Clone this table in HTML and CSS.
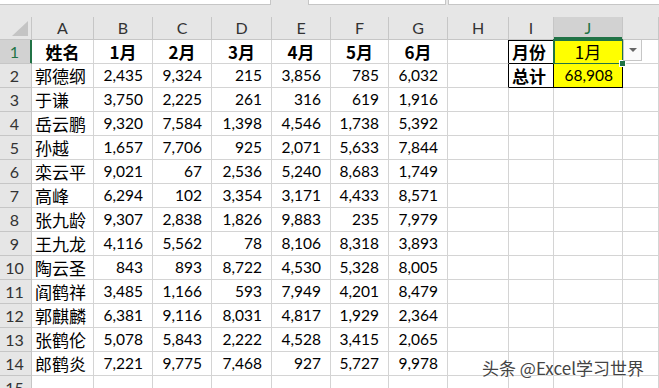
FILE: index.html
```html
<!DOCTYPE html>
<html lang="zh-CN">
  <head>
    <meta charset="UTF-8" />
    <meta name="viewport" content="width=device-width, initial-scale=1.0" />
    <title>月份汇总</title>
    <link rel="stylesheet" href="styles.css">
  </head>
  <body>
    <div class="toolbar">
      <div class="box box-name"></div>
      <div class="box box-mid"></div>
      <div class="box box-formula"></div>
    </div>

    <div class="sheet" id="sheet"></div>

    <div class="watermark">头条 @Excel学习世界</div>

    <script>
      const sheet = document.getElementById("sheet");

      const letters = ["A", "B", "C", "D", "E", "F", "G", "H", "I", "J", ""];
      const months = ["1月", "2月", "3月", "4月", "5月", "6月"];
      const rows = [
        ["郭德纲", 2435, 9324, 215, 3856, 785, 6032],
        ["于谦", 3750, 2225, 261, 316, 619, 1916],
        ["岳云鹏", 9320, 7584, 1398, 4546, 1738, 5392],
        ["孙越", 1657, 7706, 925, 2071, 5633, 7844],
        ["栾云平", 9021, 67, 2536, 5240, 8683, 1749],
        ["高峰", 6294, 102, 3354, 3171, 4433, 8571],
        ["张九龄", 9307, 2838, 1826, 9883, 235, 7979],
        ["王九龙", 4116, 5562, 78, 8106, 8318, 3893],
        ["陶云圣", 843, 893, 8722, 4530, 5328, 8005],
        ["阎鹤祥", 3485, 1166, 593, 7949, 4201, 8479],
        ["郭麒麟", 6381, 9116, 8031, 4817, 1929, 2364],
        ["张鹤伦", 5078, 5843, 2222, 4528, 3415, 2065],
        ["郎鹤炎", 7221, 9775, 7468, 927, 5727, 9978],
      ];

      function cell(cls, text) {
        const el = document.createElement("div");
        el.className = "cell " + cls;
        if (text !== undefined) el.textContent = text;
        sheet.appendChild(el);
        return el;
      }

      // Column headers
      const corner = cell("corner");
      corner.innerHTML =
        '<svg width="32" height="23" viewBox="0 0 32 23"><polygon points="12,19 28,19 28,4" fill="#c4c4c4"/></svg>';
      letters.forEach((l) => cell(l === "J" ? "col-head selected-col" : "col-head", l));

      // Total of January
      const total = rows.reduce((sum, r) => sum + r[1], 0);

      // Row 1: headings
      cell("row-head selected-row", "1");
      cell("cn bold center", "姓名");
      months.forEach((m) => cell("cn bold center", m));
      cell("edge-right");
      cell("cn bold lookup top", "月份");
      const active = cell("cn center pick lookup top", "1月");
      active.innerHTML +=
        '<span class="dropdown"><svg width="8" height="5" viewBox="0 0 8 5"><polygon points="0,0 8,0 4,4" fill="#666"/></svg></span>';
      cell("");

      // Data rows
      rows.forEach((r, i) => {
        cell("row-head", i + 2);
        cell("cn", r[0]);
        r.slice(1).forEach((n) => cell("num", n.toLocaleString("en-US")));
        if (i === 0) {
          cell("edge-right");
          cell("cn bold lookup", "总计");
          cell("num pick lookup", total.toLocaleString("en-US"));
        } else {
          cell("");
          cell("");
          cell("");
        }
        cell("");
      });

      // Partial row 15
      cell("row-head", 15);
      for (let i = 0; i < 11; i++) cell("");
    </script>
  </body>
</html>
```

FILE: styles.css
```css
body {
    margin: 0;
    width: 659px;
    height: 388px;
    overflow: hidden;
    background-color: #fff;
    font-family: Lato, "Noto Sans CJK SC", sans-serif;
    position: relative;
}

.toolbar {
    display: flex;
    height: 17px;
    background-color: #e6e6e6;
}

.box {
    height: 4px;
    background-color: #fff;
    border-bottom: 1px solid #c6c6c6;
}

.box-name {
    width: 270px;
    border-right: 1px solid #c6c6c6;
}

.box-mid {
    width: 136px;
    margin-left: 37px;
    border-left: 1px solid #c6c6c6;
    border-right: 1px solid #c6c6c6;
}

.box-formula {
    flex: 1;
    margin-left: 2px;
    border-left: 1px solid #c6c6c6;
}

.sheet {
    display: grid;
    grid-template-columns: 32px 62px 59px 59px 60px 59px 58px 59px 61px 45px 69px 1fr;
    grid-template-rows: 23px repeat(15, 24px);
}

.cell {
    box-sizing: border-box;
    border-right: 1px solid #d4d4d4;
    border-bottom: 1px solid #d4d4d4;
    padding: 0 3px;
    font-size: 15.5px;
    line-height: 23px;
    color: #000;
    white-space: nowrap;
    position: relative;
}

.corner {
    padding: 0;
    background-color: #e6e6e6;
    border-color: #c6c6c6;
}

.corner svg {
    display: block;
}

.col-head {
    background-color: #e6e6e6;
    border-color: #c6c6c6;
    text-align: center;
    color: #333;
    line-height: 22px;
    font-size: 16px;
}

.row-head {
    background-color: #e6e6e6;
    border-color: #c6c6c6;
    text-align: center;
    color: #333;
    font-size: 16px;
    padding: 0 2px 0 0;
}

.selected-col {
    background-color: #d2d2d2;
    color: #217346;
    box-shadow: inset 0 -2px 0 #217346;
}

.selected-row {
    background-color: #d2d2d2;
    color: #217346;
    box-shadow: inset -1px 0 0 #217346;
    border-right-color: #217346;
}

.cn {
    font-family: "Noto Sans CJK SC", sans-serif;
    font-size: 17px;
}

.bold {
    font-weight: bold;
}

.center {
    text-align: center;
}

.num {
    text-align: right;
    padding-right: 9px;
}

/* Lookup box in I1:J2 */
.edge-right {
    border-right-color: #000;
}

.lookup {
    border-right-color: #000;
    border-bottom-color: #000;
}

.top {
    box-shadow: inset 0 1px 0 #000;
}

.pick {
    background-color: #ffff00;
}

/* Active cell J1 */
.pick.top::after {
    content: "";
    position: absolute;
    top: -1px;
    left: -1px;
    right: -2px;
    bottom: -2px;
    border: 2px solid #217346;
}

.pick.top::before {
    content: "";
    position: absolute;
    right: -4px;
    bottom: -4px;
    width: 5px;
    height: 5px;
    background-color: #217346;
    border: 1px solid #fff;
    z-index: 2;
}

.dropdown {
    position: absolute;
    left: calc(100% + 1px);
    top: -1px;
    width: 17px;
    height: 20px;
    background-color: #fafafa;
    border: 1px solid #c6c6c6;
    display: flex;
    align-items: center;
    justify-content: center;
    z-index: 3;
}

.dropdown svg {
    display: block;
}

.watermark {
    position: absolute;
    left: 482px;
    top: 357px;
    font-family: "Noto Sans CJK SC", sans-serif;
    font-size: 17px;
    line-height: 21px;
    color: #444;
    text-shadow: 0 0 1px #fff, 0 0 2px #fff;
    white-space: nowrap;
}
```
